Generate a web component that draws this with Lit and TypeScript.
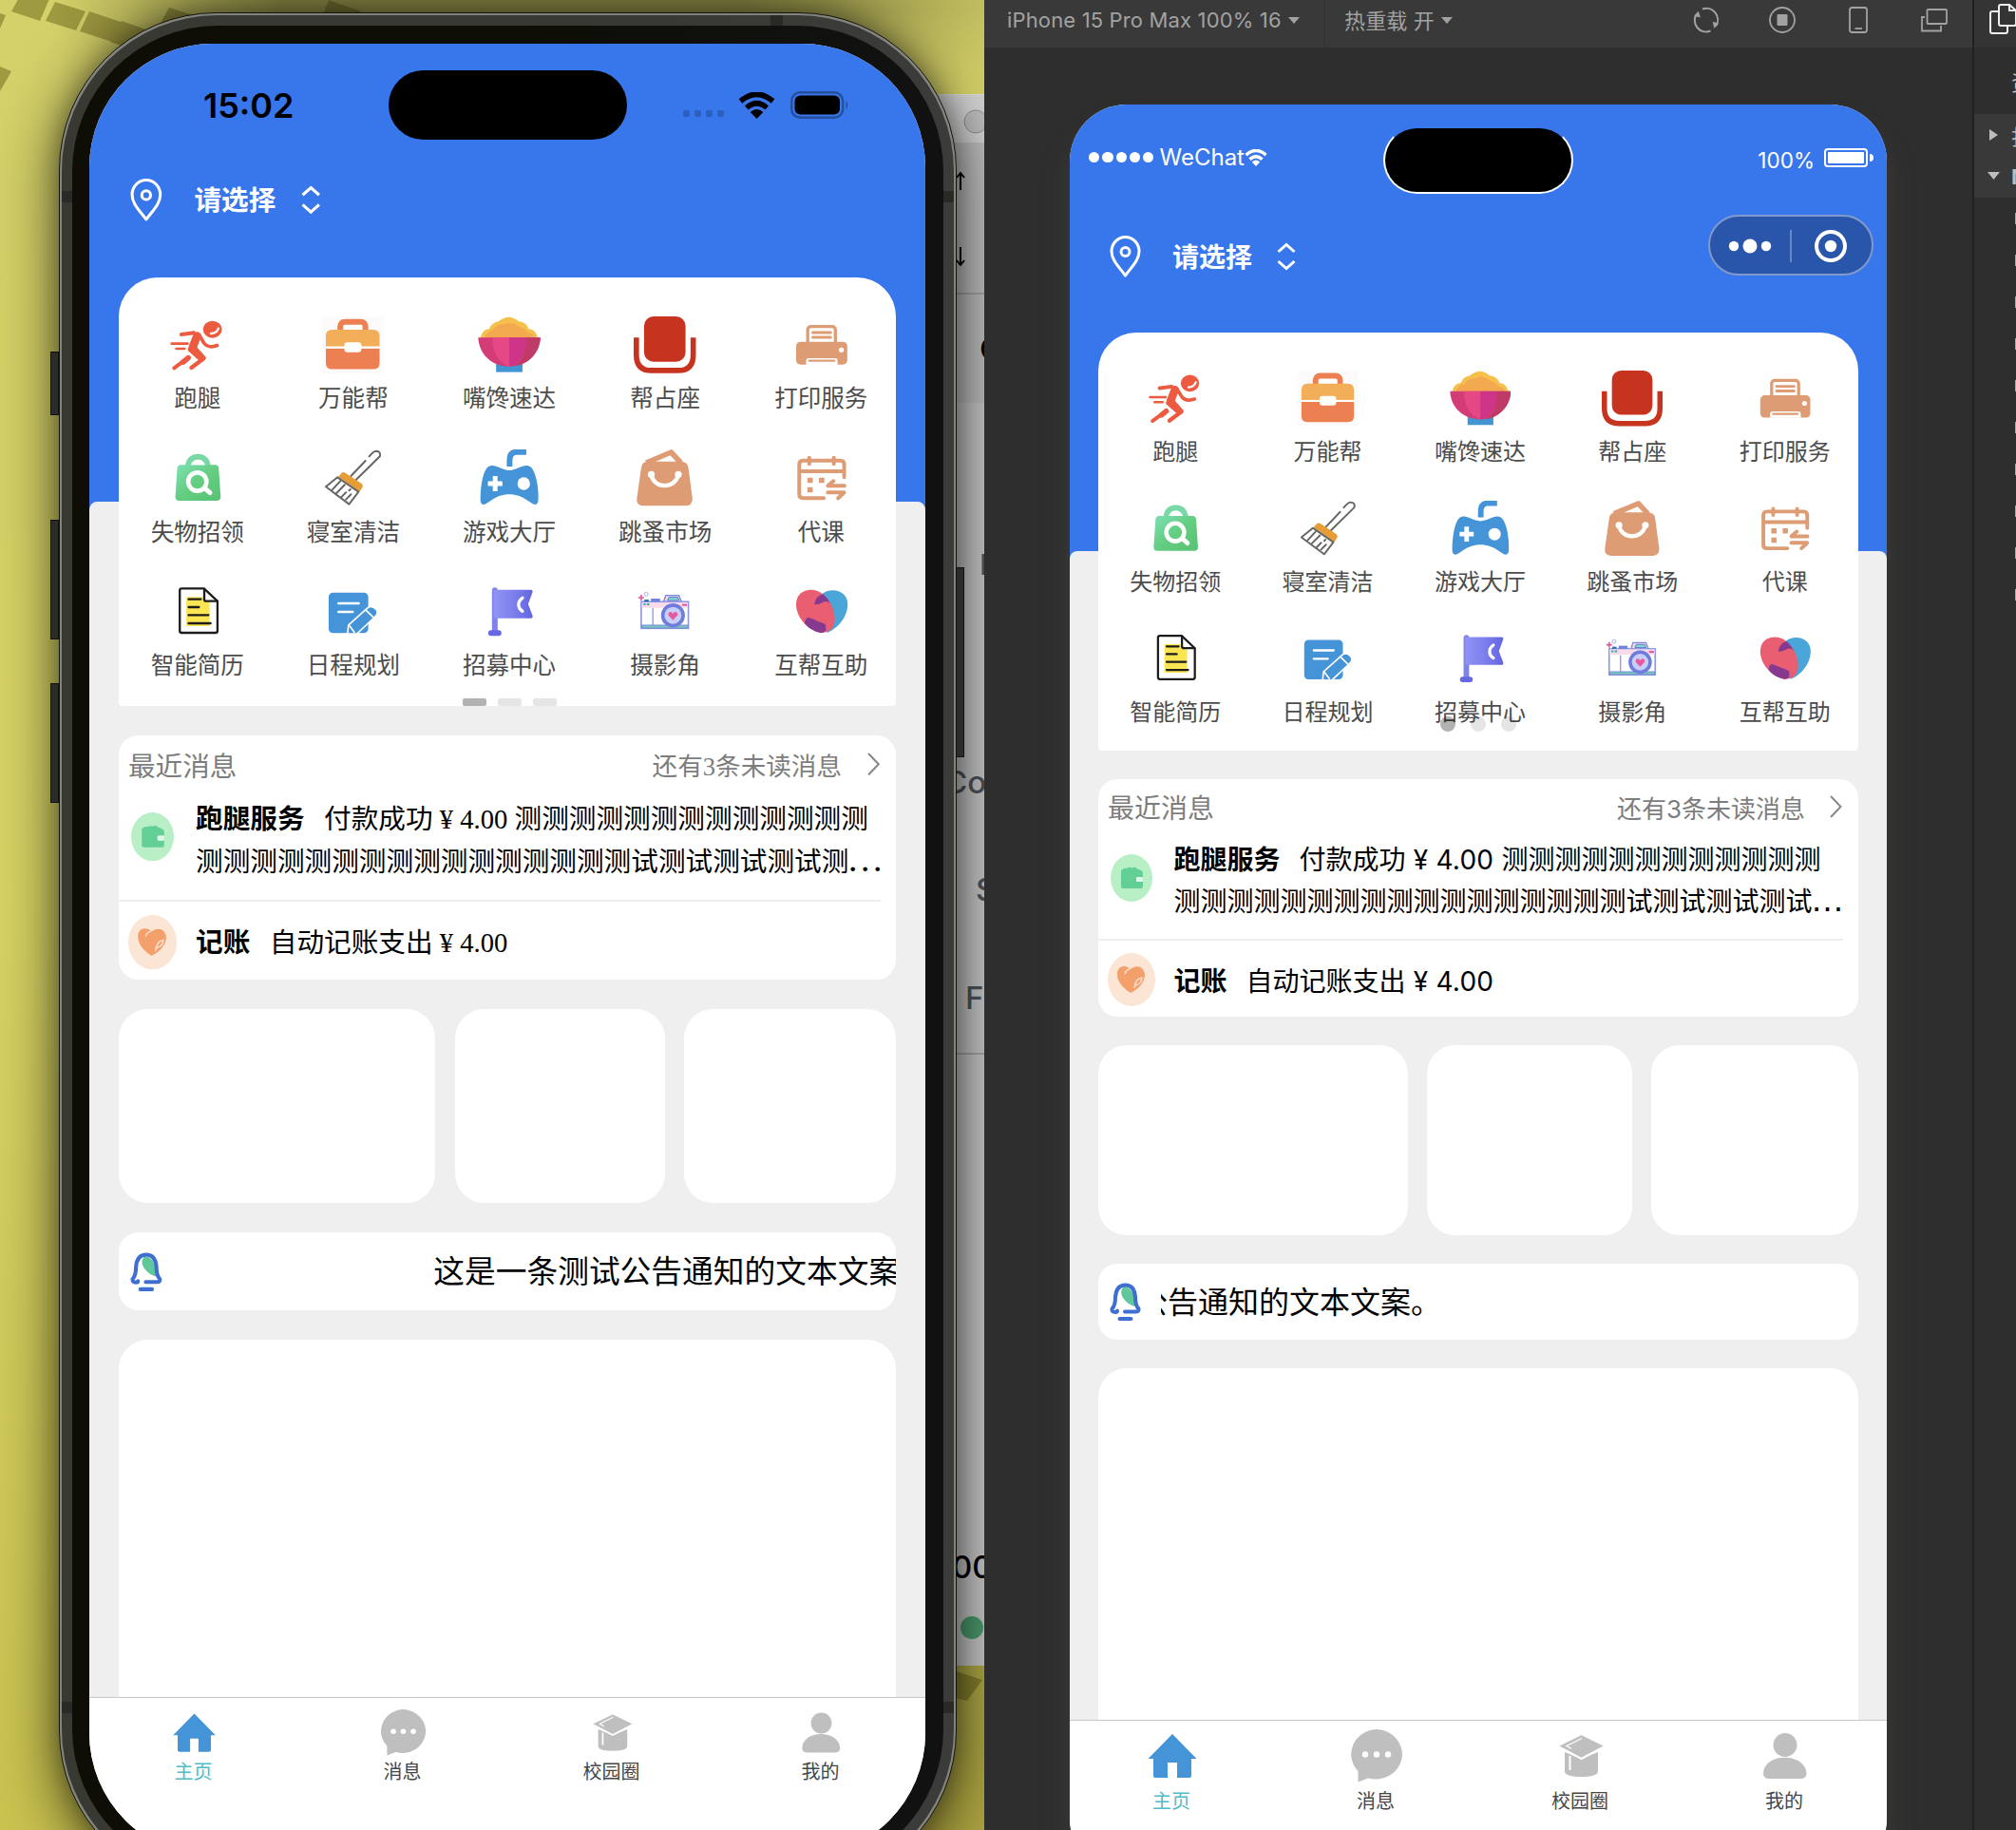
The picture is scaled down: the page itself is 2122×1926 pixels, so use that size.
import { LitElement, html, svg, css, nothing } from "lit";
import { customElement, property } from "lit/decorators.js";

const icons: Record<string, unknown> = {
  run: svg`<g fill="none" stroke="#ec5b40" stroke-linecap="round" stroke-linejoin="round">
    <path d="M48 57L88 52" stroke-width="12"/><path d="M98 62L84 98" stroke-width="26"/>
    <path d="M104 58L120 84Q128 95 144 96L162 92" stroke-width="11"/><path d="M90 98L120 132L80 162" stroke-width="13"/>
    <path d="M78 104L112 134" stroke-width="18"/>
    <path d="M70 130L25 163" stroke-width="12"/><path d="M70 131L54 144" stroke-width="17"/>
    <path d="M17 86H68M32 102H58" stroke-width="8"/></g>
    <ellipse cx="147" cy="41" rx="30" ry="27" fill="#ec5b40"/>
    <path d="M142 54Q160 54 166 38" fill="none" stroke="#fff" stroke-width="7" stroke-linecap="round"/>`,
  bag: svg`<rect width="198" height="180" fill="#fcfafa"/><rect x="58" y="17" width="80" height="40" rx="14" fill="#fff" stroke="#ed8052" stroke-width="18"/>
    <path d="M12 95V62Q12 42 32 42H163Q183 42 183 62V95z" fill="#f2ae59"/><path d="M12 101H183V147Q183 167 163 167H32Q12 167 12 147z" fill="#ed8052"/>
    <rect x="12" y="95" width="171" height="6" fill="#fff"/><rect x="71" y="82" width="54" height="31" rx="9" fill="#fff"/>`,
  bowl: svg`<rect x="58" y="140" width="84" height="36" fill="#4295d3"/>
    <path d="M8 69Q12 42 36 40Q42 20 66 16Q98-12 130 16Q154 18 162 40Q186 42 190 69z" fill="#f6c04c"/>
    <path d="M20 69Q28 46 46 44Q62 24 82 25Q112 14 132 34Q150 38 158 50Q176 52 180 69z" fill="#f3a950"/>
    <path d="M1 67H199C197 120 155 158 100 158C45 158 3 120 1 67z" fill="#d43c77"/>
    <path d="M46 67H100V158C68 150 46 115 46 67z" fill="#e54885"/><path d="M100 67H154C154 115 132 150 100 158z" fill="#ce3588"/>
    <path d="M154 67H199C197 115 160 152 118 157C144 142 154 108 154 67z" fill="#c03a68"/>`,
  seat: svg`<rect x="33" y="0" width="132" height="143" rx="30" fill="#c63420"/>
    <path d="M8.5 67V122Q8.5 171 57 171H141Q189.500 171 189.500 122V67" fill="none" stroke="#c63420" stroke-width="17"/>`,
  print: svg`<rect x="55" y="32" width="88" height="60" rx="10" fill="#fff" stroke="#de9c74" stroke-width="10"/>
    <path d="M71 51H128M71 66H128" stroke="#de9c74" stroke-width="9" stroke-linecap="round"/>
    <rect x="18" y="80" width="163" height="72" rx="14" fill="#de9c74"/><circle cx="162" cy="106" r="8" fill="#fff"/>
    <path d="M50 153V140Q50 132 58 132H142Q150 132 150 140V153z" fill="#fff"/><path d="M60 140H140" stroke="#de9c74" stroke-width="7" stroke-linecap="round"/>`,
  lost: svg`<defs><linearGradient id="g" x1="0" y1="0" x2="1" y2="1"><stop offset="0" stop-color="#7ee0b4"/><stop offset=".5" stop-color="#63cd80"/><stop offset="1" stop-color="#58c174"/></linearGradient></defs>
    <path d="M69 56Q72 24 101 23Q130 24 133 56" fill="none" stroke="#78d8a6" stroke-width="18"/>
    <path d="M46 49H156Q166 49 167 60L173 148Q174 162 160 162H42Q28 162 29 148L35 60Q36 49 46 49z" fill="url(#g)"/>
    <path d="M78 49Q84 32 101 32Q118 32 124 49z" fill="#fff"/>
    <circle cx="99" cy="102" r="29" fill="none" stroke="#fff" stroke-width="14"/><path d="M122 122L139 137" stroke="#fff" stroke-width="15" stroke-linecap="round"/>`,
  broom: svg`<g fill="none" stroke="#666" stroke-width="6" stroke-linecap="round" stroke-linejoin="round">
    <path d="M92 84L138 36M108 96L184 22Q188 6 172 5Q164 5 150 22"/></g>
    <path d="M52 86L62 74Q67 70 74 74L126 108Q132 114 128 120L119 134z" fill="#e79d35"/>
    <g fill="#fff" stroke="#666" stroke-width="6" stroke-linecap="round" stroke-linejoin="round"><path d="M49 88L12 118L86 173L116 134z"/>
    <path d="M32 128L58 100M46 138L72 112M60 152L76 136M76 158L92 142M86 130L90 126" /></g>`,
  game: svg`<path d="M30 57C50 40 70 64 100 66C130 64 150 40 170 57C186 75 194 122 192 160C191 178 180 177 165 166C140 148 122 142 100 142C78 142 60 148 35 166C20 177 9 178 8 160C8 122 14 75 30 57z" fill="#4594d8"/>
    <path d="M101 54V34Q101 8 124 8H154" fill="none" stroke="#4594d8" stroke-width="18"/>
    <path d="M32 108H78M55 84V132" stroke="#fff" stroke-width="15"/><circle cx="146" cy="108" r="20" fill="#fff"/>`,
  market: svg`<path d="M40 42L119 9L150 42" fill="none" stroke="#de9c74" stroke-width="17" stroke-linejoin="round"/>
    <path d="M45 38H150Q172 38 174 58L187 155Q188 178 163 178H33Q8 178 10 155L24 58Q26 38 45 38z" fill="#de9c74"/>
    <path d="M56 80C64 126 132 126 142 80" fill="none" stroke="#fff" stroke-width="13"/><circle cx="56" cy="79" r="11" fill="#fff"/><circle cx="142" cy="79" r="11" fill="#fff"/>`,
  cal: svg`<g fill="none" stroke="#de9c74" stroke-width="12" stroke-linecap="round" stroke-linejoin="round">
    <path d="M106 154H40Q28 154 28 142V48Q28 35 40 35H159Q171 35 171 48V88M28 69H171M60 26V46M138 26V46"/>
    <path d="M172 115H119L137 100M119 136H171L152 154"/></g>
    <path d="M54 89h17v17h-17zM91 89h17v17h-17zM54 119h17v17h-17z" fill="#de9c74"/>`,
  doc: svg`<path d="M49 16H120L163 56V150Q163 156 157 156H49Q43 156 43 150V22Q43 16 49 16z" fill="#fff"/>
    <path d="M64 43H122V58H138V135H64z" fill="#fbe552"/>
    <g fill="none" stroke="#1c1c1c" stroke-width="7" stroke-linecap="round" stroke-linejoin="round"><path d="M49 16H120L163 56V150Q163 156 157 156H49Q43 156 43 150V22Q43 16 49 16z"/>
    <path d="M121 18V50Q121 56 127 56H162M71 50H110M71 75H104M71 100H134M71 126H141"/></g>`,
  plan: svg`<rect x="21" y="29" width="126" height="128" rx="14" fill="#4594d8"/><path d="M52 63H117M52 90H98" stroke="#fff" stroke-width="7" stroke-linecap="round"/>
    <path d="M81 160L84 132L142 80Q156 66 172 82Q182 94 168 106L110 160z" fill="#4594d8" stroke="#fff" stroke-width="5"/>
    <path d="M137 82L166 110M86 132L104 156" stroke="#fff" stroke-width="5"/><rect x="74" y="158" width="50" height="8" fill="#fff"/>`,
  flag: svg`<defs><linearGradient id="f"><stop offset="0" stop-color="#9193f3"/><stop offset=".5" stop-color="#7d7fee"/><stop offset="1" stop-color="#6365e0"/></linearGradient></defs>
    <rect x="45" y="13" width="18" height="146" rx="9" fill="#8082ee"/><rect x="33" y="148" width="42" height="18" rx="9" fill="#6668e2"/>
    <path d="M50 20H168Q176 20 174 28L160 65L174 102Q176 110 168 110H50z" fill="url(#f)"/>
    <path d="M142 46Q128 56 130 67Q128 78 142 88" fill="none" stroke="#fff" stroke-width="10" stroke-linecap="round"/>`,
  cam: svg`<path d="M95 58L102 38H144L152 58z" fill="#f6d7ec" stroke="#7b86dd" stroke-width="4"/><path d="M108 54L112 44H140L144 54z" fill="#7fd8d4" stroke="#5b77c8" stroke-width="3"/>
    <rect x="24" y="58" width="150" height="84" fill="#fff" stroke="#8e97e4" stroke-width="5"/><path d="M26 60H172V77H26z" fill="#f9dbe9"/>
    <path d="M26 132H172V141H26z" fill="#74cbb9" stroke="#7b86dd" stroke-width="3"/><path d="M61 78V132" stroke="#8e97e4" stroke-width="4"/>
    <path d="M55 48H84V58H55z" fill="#7481dd"/><path d="M34 51H48V58H34z" fill="#2f70b8"/><path d="M31 66H38M42 66H50" stroke="#35b2a8" stroke-width="6"/><path d="M154 68H170" stroke="#e0559a" stroke-width="6"/>
    <circle cx="125" cy="101" r="38" fill="#6f7cdb"/><circle cx="125" cy="101" r="27" fill="#c5cff8"/>
    <path d="M125 116L111 101Q108 91 118 90Q123 91 125 96Q127 91 132 90Q142 91 139 101z" fill="#e75aa0"/>
    <path d="M24 36V54M15 45H33" stroke="#e0559a" stroke-width="5"/><circle cx="40" cy="34" r="6" fill="none" stroke="#a9b0ee" stroke-width="3"/>`,
  heart: svg`<path d="M95 38C125 8 184 20 182 68C181 105 152 142 118 155L104 150z" fill="#4aa6d9"/>
    <path d="M100 156C60 152 18 110 18 66C18 20 70 8 102 33C130 55 146 95 140 125Q134 154 100 156z" fill="#e95f71"/>
    <path d="M76 66Q82 38 104 34Q118 46 126 62Q114 52 98 62Q86 68 76 66z" fill="#86398f"/>
    <path d="M45 126Q48 106 58 108L70 112Q80 116 86 119Q100 122 112 130L113 147Q110 156 96 156Q64 150 45 126z" fill="#86398f"/>`,
};

const wifi = (w: number, h: number, c: string) => html`<svg width=${w} height=${h} viewBox="0 0 40 28" preserveAspectRatio="none">
  <path d="M2.500 9.500Q20-5 37.500 9.500" fill="none" stroke=${c} stroke-width="5.600"/><path d="M9 16.500Q20 7 31 16.500" fill="none" stroke=${c} stroke-width="5.600"/>
  <path d="M20 28L13 21Q20 15 27 21z" fill=${c}/></svg>`;

const services: [string, string][] = [
  ["run", "跑腿"], ["bag", "万能帮"], ["bowl", "嘴馋速达"], ["seat", "帮占座"], ["print", "打印服务"],
  ["lost", "失物招领"], ["broom", "寝室清洁"], ["game", "游戏大厅"], ["market", "跳蚤市场"], ["cal", "代课"],
  ["doc", "智能简历"], ["plan", "日程规划"], ["flag", "招募中心"], ["cam", "摄影角"], ["heart", "互帮互助"],
];

@customElement("home-page")
class HomePage extends LitElement {
  @property({ reflect: true }) platform: "device" | "devtools" = "devtools";

  static styles = css`
    :host { display: block; width: 860px; font-family: Inter, "Noto Sans CJK SC", sans-serif; color: #000; }
    :host([platform="device"]) { zoom: 1.0233; }
    .page { display: grid; grid-template-columns: minmax(0, 1fr); background: #3876eb; }
    .sheet { grid-area: 1 / 1; margin-top: 470px; background: #efefef; border-radius: 8px 8px 0 0; }
    :host([platform="device"]) .sheet { margin-top: 471px; }
    .content { grid-area: 1 / 1; display: flex; flex-direction: column; padding: 0 30px; height: 1900px; box-sizing: border-box; }
    :host([platform="device"]) .content { padding-top: 0.700px; }
    .locate { display: flex; align-items: center; height: 44px; margin: 138px 0 58px; padding-left: 12px; color: #fff; font-size: 28px; font-weight: 700; }
    .locate span { margin: -3px 26px 0 33px; }
    .locate svg { flex: none; }
    .card { background: #fff; border-radius: 20px; flex: none; }
    .services { position: relative; display: grid; grid-template-columns: repeat(5, 160.400px); grid-auto-rows: 137px; height: 440px; padding: 40px 0 0 1px; box-sizing: border-box; border-radius: 40px 40px 4px 4px; }
    .service { display: flex; flex-direction: column; align-items: center; font-size: 24px; line-height: 33px; color: #4c4c4c; gap: 10px; }
    .service svg { display: block; width: 64px; height: 58.600px; }
    .pager { position: absolute; left: 0; right: 0; top: 404px; display: flex; justify-content: center; gap: 16px; }
    .pager i { width: 16px; height: 16px; border-radius: 50%; background: rgba(0,0,0,.1); }
    .pager i:first-child { background: rgba(0,0,0,.3); }
    :host([platform="device"]) .pager { top: 432.500px; gap: 12px; left: 5px; }
    :host([platform="device"]) .pager i { width: 24px; height: 8px; border-radius: 2px; }
    .messages { height: 250px; margin-top: 30px; display: flex; flex-direction: column; }
    :host([platform="device"]) .messages { height: 251px; margin-top: 31px; }
    .head { display: flex; align-items: center; height: 59px; padding: 0 17px 0 10px; color: #7d7d7d; font-size: 28px; }
    .head .more { margin-left: auto; margin-right: 26px; font-size: 26px; }
    .msg { display: flex; align-items: center; font-size: 28px; line-height: 44px; white-space: nowrap; }
    .first { height: 112px; border-bottom: 2px solid #eee; margin-right: 16px; box-sizing: border-box; }
    .first .text { height: 88px; margin-top: -13px; }
    :host([platform="device"]) .first .text { margin-top: -11px; }
    .first .icon { margin-top: -20px; }
    .second { height: 80px; }
    .second .text { margin-top: 5px; }
    .second .icon { margin-top: 2px; }
    .icon { width: 60px; display: flex; justify-content: center; margin-left: 5px; margin-right: 14.500px; flex: none; }
    b { margin-right: 20px; font-weight: 700; }
    .price { letter-spacing: .25px; }
    :host([platform="device"]) .price { letter-spacing: 0; }
    .cut { font: 36px/20px "Liberation Sans", sans-serif; margin-left: -2px; }
    :host([platform="device"]) .cut { font: 38px/20px "Liberation Serif", serif; }
    :host([platform="device"]) .msg, :host([platform="device"]) .more { font-family: "Liberation Serif", "Noto Sans CJK SC", serif; }
    .tiles { display: grid; grid-template-columns: 326px 216px 218px; gap: 20px; height: 200px; margin-top: 30px; flex: none; }
    .tiles .card { border-radius: 30px; }
    .notice { height: 80px; margin-top: 30px; display: flex; align-items: center; padding-left: 12px; }
    .ticker { margin-left: 21px; flex: 1; min-width: 0; overflow: hidden; white-space: nowrap; font-size: 32px; line-height: 46px; padding-top: 1px; }
    .ticker span { display: inline-block; margin-left: -217px; }
    :host([platform="device"]) .ticker span { margin-left: 258px; }
    .feed { flex: 1; margin-top: 30px; border-radius: 30px 30px 0 0; }
  `;

  render() {
    const device = this.platform === "device";
    const c = "测";
    return html`<div class="page">
      <div class="sheet"></div>
      <div class="content">
        <div class="locate">
          <svg width="33" height="44" viewBox="0 0 33 44" fill="none" stroke="#fff" stroke-width="3"><path d="M16.500 42C10 33 2 26 2 16.500A14.500 15 0 0 1 31 16.500C31 26 23 33 16.500 42z" stroke-linejoin="round"/><circle cx="16.500" cy="17" r="4.500"/></svg>
          <span>请选择</span>
          <svg width="20" height="30" viewBox="0 0 20 30" fill="none" stroke="#fff" stroke-width="3"><path d="M1.500 10L10 2.500L18.500 10M1.500 20L10 27.500L18.500 20"/></svg>
        </div>
        <div class="card services">
          ${services.map(([k, t]) => html`<div class="service"><svg viewBox="0 0 198 180" preserveAspectRatio="none">${icons[k]}</svg><span>${t}</span></div>`)}
          <div class="pager"><i></i><i></i><i></i></div>
        </div>
        <div class="card messages">
          <div class="head"><span>最近消息</span><span class="more">还有3条未读消息</span>
            <svg width="13" height="24" viewBox="0 0 13 24" fill="none" stroke="#888" stroke-width="2"><path d="M1 1L11.500 12L1 23"/></svg></div>
          <div class="msg first">
            <div class="icon"><svg width="44" height="50" viewBox="0 0 44 50"><ellipse cx="22" cy="25" rx="22" ry="25" fill="#b9efc5"/>
              <path d="M13 16Q14 14 17 15Q20 13 22 14.500Q26 12.500 28 15.500L32 17Q34 18 34 20V24H29V29H34V34Q34 36 32 36H13Q11 36 11 34V18Q11 16 13 16z" fill="#62cf94"/><rect x="27" y="24" width="7" height="5" rx="1" fill="#dff7e6"/></svg></div>
            <div class="text"><b>跑腿服务</b>付款成功<span class="price"> ¥ 4.00 </span>${c.repeat(device ? 13 : 12)}<br>${c.repeat(device ? 16 : 17)}试测试测试测试${device ? c : nothing}<span class="cut">…</span></div>
          </div>
          <div class="msg second">
            <div class="icon"><svg width="50" height="56" viewBox="0 0 50 56"><ellipse cx="25" cy="28" rx="25" ry="28" fill="#fbe5d4"/>
              <path d="M24 42C15 36 10 30 10 22C10 13 19 12 24 17C30 12 39 14 39 24C38 32 32 38 24 42z" fill="#f3a06c"/><path d="M18 22Q19 18 24 16M29 34Q36 32 36 26Q29 27 28 37" fill="none" stroke="#fbe0cc" stroke-width="1.500"/></svg></div>
            <div class="text"><b>记账</b>自动记账支出<span class="price"> ¥ 4.00</span></div>
          </div>
        </div>
        <div class="tiles"><div class="card"></div><div class="card"></div><div class="card"></div></div>
        <div class="card notice">
          <svg width="33" height="40" viewBox="0 0 33 40" fill="none" stroke="#3e6fd0" stroke-width="4" stroke-linecap="round"><path d="M15 4Q27 6 27 25Q20 24 14 16Q10 9 15 4z" fill="#5fc79a" stroke="none"/>
            <path d="M16 30.500H28Q31 30.500 30.500 27.500Q27 24 27 15Q26 2.500 16.500 2.500Q7 2.500 6 15Q6 24 2.500 27.500Q2 31 6 31Q8 31 8 29.500"/><path d="M10.500 38H22.500"/></svg>
          <div class="ticker"><span>这是一条测试公告通知的文本文案。</span></div>
        </div>
        <div class="card feed"></div>
      </div>
    </div>`;
  }
}

const tabIcons = [
  svg`<path d="M28 5L53.500 31H48V49Q48 51 46 51H33V35H23V51H10Q8 51 8 49V31H2.500z" fill="#4594d8" stroke-linejoin="round"/>`,
  svg`<path d="M28 0A28 26.300 0 1 1 19 51.500L8.500 55.500V44A28 26.300 0 0 1 28 0z" fill="#bfbfbf"/><circle cx="16" cy="26.500" r="3.200" fill="#fff"/><circle cx="28" cy="26.500" r="3.200" fill="#fff"/><circle cx="40" cy="26.500" r="3.200" fill="#fff"/>`,
  svg`<path d="M11 24L28.500 31L46 24V45Q44 50 28.500 50Q13 50 11 45z" fill="#bfbfbf"/><path d="M28.500 5L54 17.500L28.500 31L3 17.500z" fill="#bfbfbf" stroke="#fff" stroke-width="2"/><path d="M29 9.500L13 17.500L18 20.500" fill="none" stroke="#fff" stroke-width="1.300"/><path d="M16.500 28V43" stroke="#fff" stroke-width="2"/>`,
  svg`<ellipse cx="28" cy="16.500" rx="12.500" ry="12.500" fill="#bfbfbf"/><path d="M5 47C5 24 50 24 50.500 47Q50 52 44 52H12Q5 52 5 47z" fill="#bfbfbf"/>`,
];

@customElement("tab-bar")
class TabBar extends LitElement {
  static styles = css`
    :host { display: grid; grid-template-columns: repeat(4, 1fr); background: #fff; border-top: 1.500px solid #c8c8c8; box-sizing: border-box; font-family: "Noto Sans CJK SC", sans-serif; padding: var(--tab-pad) 0 0; }
    .tab { display: flex; flex-direction: column; align-items: center; font-size: 20px; line-height: 26px; color: #464646; gap: var(--tab-gap); }
    .tab:first-child { color: #50bcc6; }
    svg { display: block; width: var(--tab-icon); height: var(--tab-icon); }
    span { margin-left: -1px; }
  `;
  render() {
    return ["主页", "消息", "校园圈", "我的"].map((t, i) => html`<div class="tab"><svg viewBox="0 0 56 56">${tabIcons[i]}</svg><span>${t}</span></div>`);
  }
}

@customElement("device-window")
class DeviceWindow extends LitElement {
  static styles = css`
    :host { display: block; }
    .shell { width: 945px; height: 1974px; box-sizing: border-box; padding: 2px; border: 1px solid #15150f; border-radius: 166px; background: #84847e; box-shadow: 0 14px 60px 8px rgba(0,0,0,.5), 0 0 26px rgba(0,0,0,.35); position: relative; }
    .band { height: 100%; box-sizing: border-box; padding: 11px; border-radius: 164px; background: linear-gradient(90deg, #393933, #393933 60%, #3b3b3a); }
    .bezel { height: 100%; box-sizing: border-box; padding: 19px 18px; border-radius: 153px; background: linear-gradient(90deg, #0e0e06, #0e0e06 50%, #111 95%); }
    .screen { position: relative; width: 880px; height: 1908px; border-radius: 130px; overflow: hidden; display: flex; flex-direction: column; background: #fff; }
    .view { height: 1740px; overflow: hidden; flex: none; }
    tab-bar { flex: 1; --tab-icon: 49px; --tab-gap: 3.500px; --tab-pad: 11.500px; }
    .status { position: absolute; left: 0; right: 0; top: 28px; height: 73px; display: flex; align-items: center; font: 600 36px Inter, sans-serif; color: #000; }
    .time { width: 314.500px; text-align: center; padding-left: 21px; box-sizing: border-box; }
    .island { width: 251px; height: 73px; border-radius: 37px; background: #000; }
    .sig { display: flex; gap: 5px; margin: 18px 15px 0 59px; }
    .sig i { width: 7px; height: 7px; border-radius: 2px; background: #2d5fbe; }
    .battery { margin-left: 16px; }
    .key { position: absolute; width: 9px; background: #2b2b2a; border: 1px solid #111; box-sizing: border-box; }
    .antenna { position: absolute; background: #292925; }
  `;
  render() {
    return html`<div class="shell">
      <div class="band"><div class="bezel"><div class="screen">
        <div class="view"><home-page platform="device"></home-page></div>
        <tab-bar></tab-bar>
        <div class="status"><span class="time">15:02</span><span class="island"></span><span class="sig"><i></i><i></i><i></i><i></i></span>
          ${wifi(39, 28, "#000")}
          <svg class="battery" width="62" height="29" viewBox="0 0 62 29"><rect x="1.200" y="1.200" width="54" height="26.500" rx="9" fill="none" stroke="#24509c" stroke-width="2.400"/><rect x="4.500" y="4.500" width="47.500" height="20" rx="6" fill="#000"/><path d="M58.500 10Q62 14.500 58.500 19z" fill="#24509c"/></svg>
        </div>
      </div></div></div>
      <i class="key" style="left:-10px;top:356px;height:67px"></i><i class="key" style="left:-10px;top:533px;height:126px"></i>
      <i class="key" style="left:-10px;top:705px;height:126px"></i><i class="key" style="left:943px;top:583px;height:200px"></i>
      <i class="antenna" style="left:2px;top:187px;width:11px;height:12px"></i><i class="antenna" style="left:930px;top:187px;width:11px;height:12px"></i>
      <i class="antenna" style="left:2px;top:1777px;width:11px;height:12px"></i><i class="antenna" style="left:930px;top:1777px;width:11px;height:12px"></i>
      <i class="antenna" style="left:748px;top:2px;width:13px;height:11px"></i>
    </div>`;
  }
}

@customElement("app-root")
class AppRoot extends LitElement {
  static styles = css`
    :host { display: block; font-family: Inter, "Noto Sans CJK SC", sans-serif; }
    .desk { display: grid; grid-template-columns: 1036px 1040px 46px; height: 1926px; width: 2122px; overflow: hidden; background: #2e2e2e; }
    .wall { position: relative; overflow: hidden; height: 1926px; background: linear-gradient(170deg, #d4d16a, #d8d465 45%, #c8c04c); }
    .tiles, .shade { position: absolute; inset: 0; }
    .shade { background: linear-gradient(90deg, transparent 60px, rgba(50,48,25,.5) 300px, rgba(50,48,25,.5) 780px, rgba(50,48,25,.12)) top / 100% 100px no-repeat;
      -webkit-mask-image: linear-gradient(#000 10px, transparent 100px); mask-image: linear-gradient(#000 10px, transparent 100px); }
    .dusk { position: absolute; right: 0; bottom: 0; width: 120px; height: 180px; background: rgba(60,55,20,.2); }
    .window { position: absolute; left: 700px; top: 99px; width: 336px; height: 1654px; background: #bdbdbd; border-top: 1px solid #ddd; box-sizing: border-box; }
    .window svg { display: block; }
    device-window { position: absolute; left: 62px; top: 13px; }
    .sim { display: flex; flex-direction: column; min-width: 0; }
    .bar { display: flex; align-items: center; height: 50px; flex: none; background: #393939; box-sizing: border-box; color: #a2a2a2; font-size: 22px; padding: 0 26px 8px 24px; }
    .pick { display: flex; align-items: center; gap: 7px; height: 100%; }
    .pick .t { white-space: nowrap; letter-spacing: .15px; }
    .pick.reload { width: 154px; padding-left: 20px; }
    .pick.reload .t { margin-top: -3px; }
    .first { width: 333px; }
    .rule { width: 2px; height: 50px; margin-bottom: -8px; background: #353535; }
    .tools { margin-left: auto; display: flex; gap: 52px; }
    .stage { display: flex; justify-content: center; padding: 60px 0 0; width: 1040px; height: 1876px; box-sizing: border-box; overflow: hidden; background: #2e2e2e; }
    .screen { position: relative; width: 860px; height: 1864px; border-radius: 60px; overflow: hidden; background: #fff; display: flex; flex-direction: column; }
    .halo { width: 860px; height: 1864px; flex: none; border-radius: 60px; box-shadow: 0 24px 30px rgba(80,80,76,.4); }
    .view { height: 1700px; overflow: hidden; flex: none; }
    tab-bar { flex: 1; --tab-icon: 56px; --tab-gap: 6px; --tab-pad: 9px; }
    .status { position: absolute; left: 20px; right: 14px; top: 22px; height: 74px; display: flex; align-items: center; color: #fff; font-size: 24px; }
    .dots { display: flex; gap: 3px; margin-right: 6px; }
    .dots i { width: 11.300px; height: 11.300px; border-radius: 50%; background: #fff; }
    .carrier { display: flex; align-items: center; width: 310px; padding-bottom: 7px; box-sizing: border-box; }
    .island { width: 200px; height: 71px; margin-bottom: 1px; border-radius: 36px; background: #000; border: 2px solid #fff; border-top-color: #3876eb; box-sizing: border-box; }
    .power { margin-left: auto; display: flex; align-items: center; gap: 10px; font-size: 22.500px; margin-bottom: 2px; }
    .power svg { margin-bottom: 5px; }
    .capsule { position: absolute; right: 14px; top: 116px; width: 174px; height: 64px; box-sizing: border-box; border: 2px solid #8199cb; border-radius: 32px; background: #2955aa; display: flex; align-items: center; }
    .side { border-left: 2px solid #202020; background: #2e2e2e; color: #bdbdbd; overflow: hidden; display: flex; flex-direction: column; font-size: 22px; }
    .files { height: 50px; background: #343434; flex: none; padding: 4px 0 0 16px; box-sizing: border-box; }
    .line { display: flex; align-items: center; height: 44px; flex: none; white-space: nowrap; }
    .title { height: 70px; padding-left: 39px; box-sizing: border-box; }
    .group { background: #393939; padding-left: 14px; }
    .group svg { flex: none; margin-right: 11px; }
    .entry i { width: 10px; height: 12px; margin-left: 43px; background: #aaa; flex: none; }
  `;

  render() {
    return html`<div class="desk">
      <div class="wall">
        <svg class="tiles" width="1036" height="1926">
          <g fill="#5d5810" opacity=".45">
            <path d="M22-6L54-6L42 22L12 12z"/><path d="M58 2L90 12L80 32L48 22z"/><path d="M94 12L130 24L118 44L84 33z"/><path d="M128 22L162 34L150 56L116 44z"/>
            <path d="M0 14L6 16L0 30z"/><path d="M0 70L12 75L0 96z"/><path d="M178 8L210 18L200 36L168 26z"/><path d="M346 0L380 12L374 26L340 16z"/>
            <path d="M1004 1758L1034 1768L1018 1790L1000 1786z"/>
          </g>
        </svg>
        <div class="shade"></div>
        <div class="dusk"></div>
        <div class="window"><svg width="336" height="1653">
          <rect width="336" height="50" fill="#d2d2d2"/><circle cx="327" cy="28" r="12" fill="#bdbdbd" stroke="#909090"/>
          <rect y="324" width="336" height="1330" fill="#c6c6c6"/>
          <path d="M311 100V83M307 87L311 82L315 87M311 160V178M307 174L311 179L315 174" fill="none" stroke="#000" stroke-width="2"/>
          <path d="M0 209H336M0 1009H336" stroke="#999" stroke-width="1.500"/><path d="M335 483V505" stroke="#555" stroke-width="3"/>
          <g font-family="Inter, sans-serif" font-size="33" font-weight="500" fill="#4d535a"><text x="294" y="735">Co</text><text x="327" y="848">S</text><text x="316" y="962">F</text></g>
          <g font-family="Inter, sans-serif" font-size="33" font-weight="500"><text x="331" y="279">C</text><text x="302" y="1561">00</text></g>
          <circle cx="323" cy="1613" r="12" fill="#4b9a6c"/></svg></div>
        <device-window></device-window>
      </div>
      <div class="sim">
        <div class="bar">
          <div class="pick first"><span class="t">iPhone 15 Pro Max 100% 16</span><svg width="12" height="7"><path d="M0 0H12L6 7z" fill="#a2a2a2"/></svg></div>
          <div class="rule"></div>
          <div class="pick reload"><span class="t">热重载 开</span><svg width="12" height="7"><path d="M0 0H12L6 7z" fill="#a2a2a2"/></svg></div>
          <div class="tools">
            <svg width="28" height="28" viewBox="0 0 28 28" fill="none" stroke="#a2a2a2" stroke-width="2"><path d="M10 2.500A12 12 0 0 1 24 20.500M18.500 25.500A12 12 0 0 1 4 7.500"/><path d="M1.500 10L5.500 5L7.500 11zM21 16L22.500 22.500L26.500 18z" fill="#a2a2a2" stroke-width=".5"/></svg>
            <svg width="28" height="28" viewBox="0 0 28 28"><circle cx="14" cy="14" r="13" fill="none" stroke="#a2a2a2" stroke-width="1.800"/><rect x="8.500" y="8" width="11" height="12" rx="1" fill="#a2a2a2"/></svg>
            <svg width="28" height="28" viewBox="0 0 28 28" fill="none" stroke="#a2a2a2" stroke-width="1.800"><rect x="5" y="1" width="18" height="26" rx="2.500"/><path d="M10.500 23H18"/></svg>
            <svg width="28" height="28" viewBox="0 0 28 28" fill="none" stroke="#a2a2a2" stroke-width="1.800"><rect x="6.500" y="3" width="20.500" height="15" rx="1"/><path d="M4 11H1V25.500H21V20"/></svg>
          </div>
        </div>
        <div class="stage"><div class="halo"><div class="screen">
          <div class="view"><home-page platform="devtools"></home-page></div>
          <tab-bar></tab-bar>
          <div class="status">
            <div class="carrier"><span class="dots"><i></i><i></i><i></i><i></i><i></i></span><span>WeChat</span>${wifi(24, 18, "#fff")}</div>
            <div class="island"></div>
            <div class="power"><span>100%</span><svg width="52" height="20" viewBox="0 0 52 20"><rect x="1" y="1" width="44" height="18" rx="3" fill="none" stroke="#fff" stroke-width="2"/><rect x="4" y="4" width="38" height="12" rx="1" fill="#fff"/><path d="M48 6Q52 6 52 10Q52 14 48 14z" fill="#fff"/></svg></div>
          </div>
          <div class="capsule"><svg width="170" height="60" viewBox="0 0 170 60"><g fill="#fff"><circle cx="25" cy="31" r="5.200"/><circle cx="42" cy="31" r="7.500"/><circle cx="59" cy="31" r="5.200"/><circle cx="127" cy="31" r="6.200"/></g>
            <path d="M85 14V48" stroke="#7f98c8" stroke-width="1.500"/><circle cx="127" cy="31" r="15" fill="none" stroke="#fff" stroke-width="4"/></svg></div>
        </div></div></div>
      </div>
      <div class="side">
        <div class="files"><svg width="32" height="33" viewBox="0 0 32 33" fill="none" stroke="#eee" stroke-width="2"><path d="M9 8H3Q1 8 1 10V29Q1 31 3 31H17Q19 31 19 29V24"/><path d="M21 1H12Q10 1 10 3V21Q10 23 12 23H26Q28 23 28 21V7L21 1V7H28"/></svg></div>
        <div class="line title">资源管理器</div>
        <div class="line group"><svg width="14" height="14" ><path d="M2 1L11 7L2 13z" fill="#bdbdbd"/></svg><span>打开的编辑器</span></div>
        <div class="line group"><svg width="14" height="10"><path d="M0 0H13L6.500 8z" fill="#bdbdbd"/></svg><b>MINI</b></div>
        ${Array.from({ length: 10 }, () => html`<div class="line entry"><i></i></div>`)}
      </div>
    </div>`;
  }
}
